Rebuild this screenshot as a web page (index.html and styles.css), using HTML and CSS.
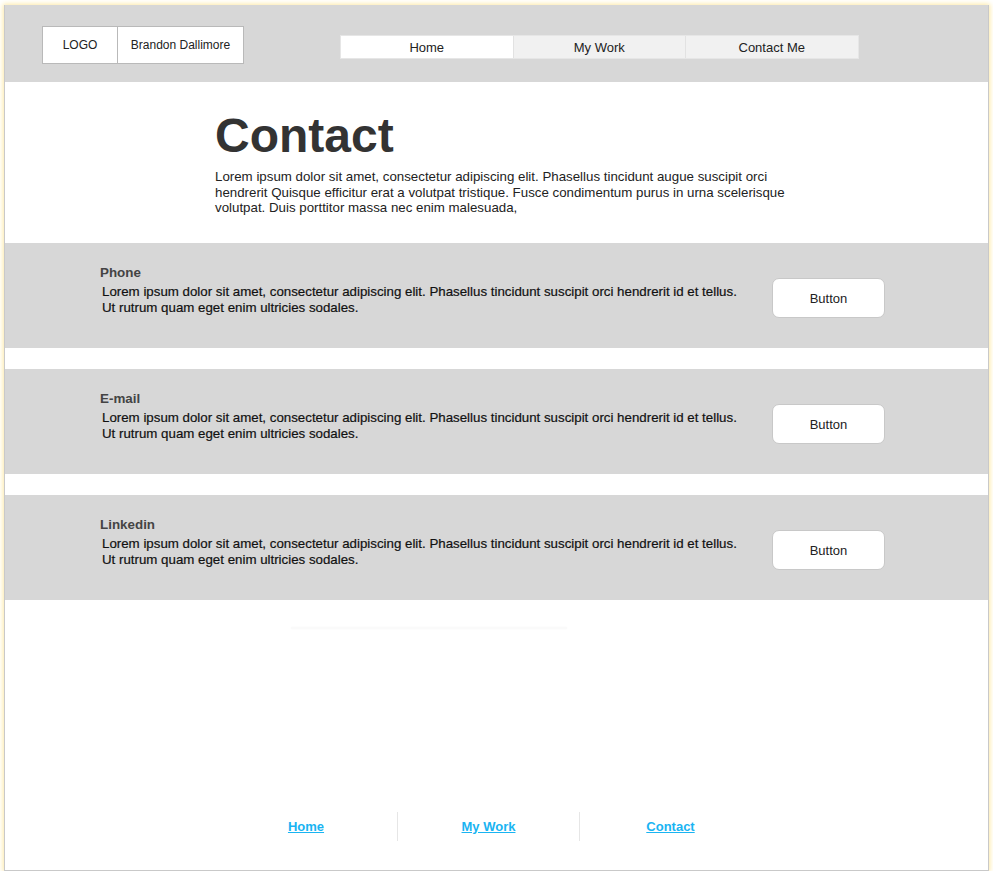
FILE: index.html
```html
<!DOCTYPE html>
<html>
<head>
<meta charset="utf-8">
<link rel="stylesheet" href="styles.css">
</head>
<body>
<div class="frame">
  <header class="header">
    <div class="brand">
      <div class="brand-cell logo">LOGO</div>
      <div class="brand-cell name">Brandon Dallimore</div>
    </div>
    <nav class="nav">
      <div class="nav-item active">Home</div>
      <div class="nav-item">My Work</div>
      <div class="nav-item">Contact Me</div>
    </nav>
  </header>

  <section class="intro">
    <h1 class="title">Contact</h1>
    <p class="lead">Lorem ipsum dolor sit amet, consectetur adipiscing elit. Phasellus tincidunt augue suscipit orci hendrerit Quisque efficitur erat a volutpat tristique. Fusce condimentum purus in urna scelerisque volutpat. Duis porttitor massa nec enim malesuada,</p>
  </section>

  <div class="bands">
    <div class="band">
      <div class="band-text">
        <div class="band-label">Phone</div>
        <div class="band-body">Lorem ipsum dolor sit amet, consectetur adipiscing elit. Phasellus tincidunt suscipit orci hendrerit id et tellus. Ut rutrum quam eget enim ultricies sodales.</div>
      </div>
      <div class="btn">Button</div>
    </div>
    <div class="band">
      <div class="band-text">
        <div class="band-label">E-mail</div>
        <div class="band-body">Lorem ipsum dolor sit amet, consectetur adipiscing elit. Phasellus tincidunt suscipit orci hendrerit id et tellus. Ut rutrum quam eget enim ultricies sodales.</div>
      </div>
      <div class="btn">Button</div>
    </div>
    <div class="band">
      <div class="band-text">
        <div class="band-label">Linkedin</div>
        <div class="band-body">Lorem ipsum dolor sit amet, consectetur adipiscing elit. Phasellus tincidunt suscipit orci hendrerit id et tellus. Ut rutrum quam eget enim ultricies sodales.</div>
      </div>
      <div class="btn">Button</div>
    </div>
  </div>

  <div class="faint-line"></div>

  <footer class="footer">
    <div class="foot-col"><a href="#">Home</a></div>
    <div class="foot-col sep"><a href="#">My Work</a></div>
    <div class="foot-col sep"><a href="#">Contact</a></div>
  </footer>
</div>
</body>
</html>
```

FILE: styles.css
```css
html, body {
  margin: 0;
  padding: 0;
  background: #ffffff;
}

body {
  font-family: "Liberation Sans", Arial, sans-serif;
  color: #333333;
  padding: 5px 4px 0 4px;
}

.frame {
  width: 985px;
  height: 866px;
  box-sizing: border-box;
  border: 1px solid #c9c9c9;
  border-top: none;
  box-shadow: 0 0 5px 1px #fde9a6;
  background: #ffffff;
  display: flex;
  flex-direction: column;
}

.header {
  height: 77px;
  background: #d7d7d7;
  display: flex;
  align-items: flex-start;
  padding-left: 37px;
  box-sizing: border-box;
}

.brand {
  display: flex;
  margin-top: 21px;
  border: 1px solid #b9b9b9;
  background: #ffffff;
}

.brand-cell {
  height: 36px;
  display: flex;
  align-items: center;
  justify-content: center;
  font-size: 12px;
  color: #222222;
}

.logo {
  width: 74px;
  border-right: 1px solid #b9b9b9;
}

.name {
  width: 125px;
}

.nav {
  display: flex;
  margin-top: 30px;
  margin-left: 96px;
  border: 1px solid #e6e6e6;
}

.nav-item {
  width: 171.5px;
  height: 22px;
  display: flex;
  align-items: center;
  justify-content: center;
  font-size: 13px;
  color: #222222;
  background: #f1f1f1;
  border-left: 1px solid #e2e2e2;
}

.nav-item.active {
  background: #ffffff;
  border-left: none;
}

.intro {
  height: 161px;
  box-sizing: border-box;
  padding: 30px 0 0 210px;
}

.title {
  margin: 0;
  font-size: 48px;
  line-height: 48px;
  font-weight: bold;
  color: #333333;
}

.lead {
  margin: 9px 0 0 0;
  width: 580px;
  font-size: 13.3px;
  line-height: 15.5px;
  color: #222222;
}

.bands {
  display: flex;
  flex-direction: column;
  gap: 21px;
}

.band {
  height: 105px;
  background: #d7d7d7;
  display: flex;
  align-items: flex-start;
  box-sizing: border-box;
  padding: 22px 0 0 95px;
}

.band-label {
  font-size: 13.4px;
  font-weight: bold;
  color: #444444;
  line-height: 15px;
  margin-bottom: 4px;
}

.band-body {
  width: 650px;
  padding-left: 2px;
  font-size: 13.3px;
  line-height: 15.5px;
  color: #111111;
  -webkit-text-stroke: 0.2px #111111;
}

.btn {
  margin-left: 20px;
  margin-top: 13px;
  width: 113px;
  height: 40px;
  box-sizing: border-box;
  border: 1px solid #c8c8c8;
  border-radius: 7px;
  background: #ffffff;
  display: flex;
  align-items: center;
  justify-content: center;
  font-size: 13px;
  color: #222222;
}

.faint-line {
  margin: 27px 0 0 286px;
  width: 276px;
  height: 2px;
  background: #fafafa;
  box-shadow: 0 0 2px #f6f6f6;
}

.footer {
  margin-top: auto;
  margin-bottom: 29px;
  display: flex;
  padding-left: 210px;
}

.foot-col {
  width: 182px;
  box-sizing: border-box;
  height: 29px;
  display: flex;
  align-items: center;
  justify-content: center;
}

.foot-col.sep {
  border-left: 1.5px solid #e6e6e6;
}

.foot-col a {
  color: #19b4f2;
  font-weight: bold;
  font-size: 13px;
  text-decoration: underline;
}
```
